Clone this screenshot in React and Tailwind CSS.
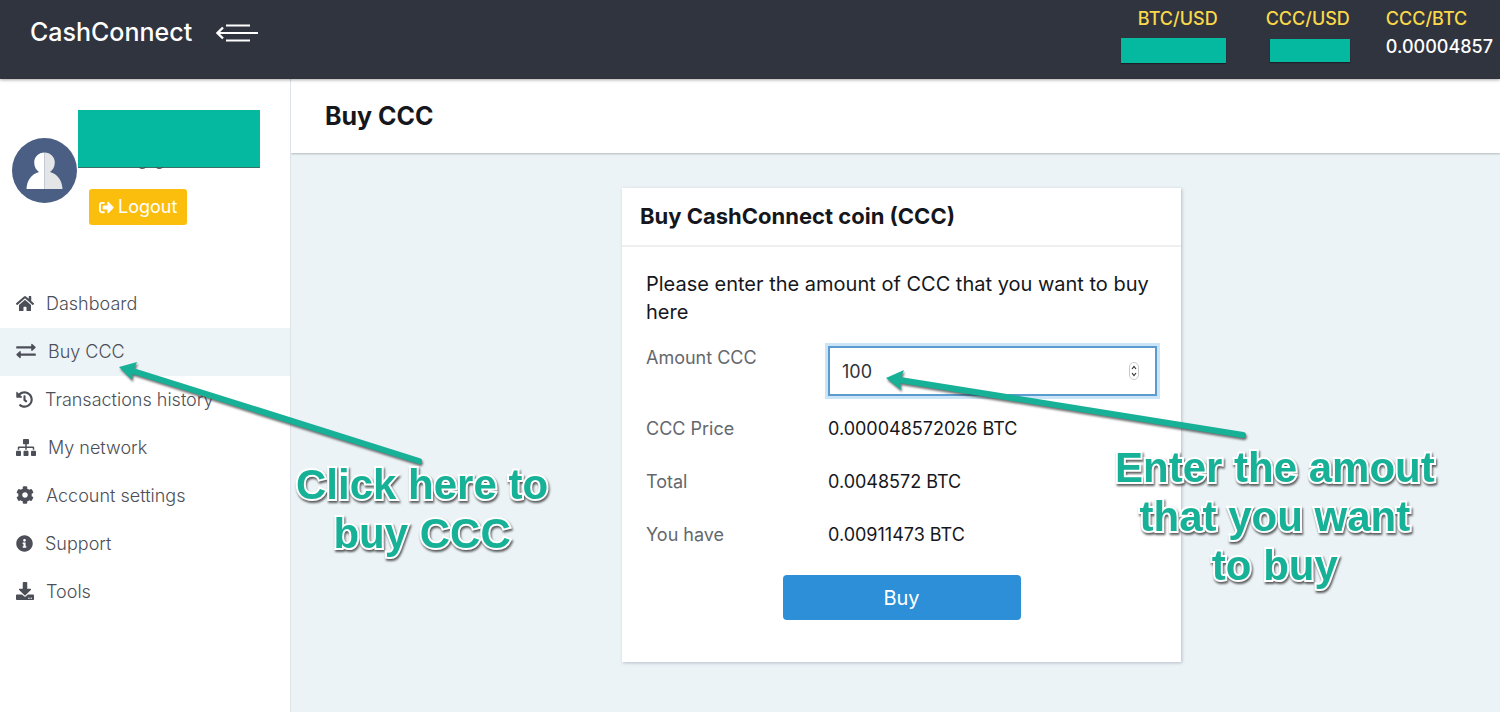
import React, { useState } from 'react';
import {
  FaHome,
  FaHistory,
  FaSitemap,
  FaCog,
  FaInfoCircle,
  FaDownload,
  FaSignOutAlt,
} from 'react-icons/fa';

// ---------------------------------------------------------------------------
// Icons
// ---------------------------------------------------------------------------

function ExchangeIcon({ className }) {
  return (
    <svg viewBox="0 0 20 16" className={className} fill="currentColor" aria-hidden="true">
      <path d="M.8 3.2h14.4V1.4c0-.6.7-.9 1.1-.5l3.1 2.9c.4.3.4.8 0 1.1l-3.1 2.9c-.4.4-1.1.1-1.1-.5V5.5H.8a.6.6 0 0 1-.6-.6V3.8c0-.3.3-.6.6-.6Z" />
      <path d="M19.2 10.4H4.8V8.7c0-.6-.7-.9-1.1-.5L.6 11.1c-.4.3-.4.8 0 1.1l3.1 2.9c.4.4 1.1.1 1.1-.5v-1.8h14.4c.3 0 .6-.3.6-.6v-1.2c0-.3-.3-.6-.6-.6Z" />
    </svg>
  );
}

function MenuArrowIcon() {
  return (
    <svg width="42" height="20" viewBox="0 0 42 20" fill="none" stroke="white" strokeWidth="2" aria-hidden="true">
      <path d="M10 2.5h24M2 10h40M10 17.5h24" />
      <path d="M7 4.5 1.5 10 7 15.5" strokeWidth="2.400" />
    </svg>
  );
}

function Avatar() {
  return (
    <svg viewBox="0 0 65 65" className="mt-7 h-[65px] w-[65px] shrink-0" role="img" aria-label="Profile">
      <circle cx="32.5" cy="32.5" r="32.5" fill="#4a5f83" />
      <path d="M32.5 14.5c-6 0-10.300 4.500-10.300 10 0 4.500 2 7.500 4.800 9.500C19.500 36 15 42 14.500 51h18Z" fill="#fff" />
      <path d="M32.500 14.500c6 0 10.300 4.500 10.300 10 0 4.500-2 7.500-4.800 9.500C45.500 36 50 42 50.500 51h-18Z" fill="#e4e5e7" />
    </svg>
  );
}

const NAV = [
  { label: 'Dashboard', icon: FaHome, size: 'h-[17px] w-[18px]' },
  { label: 'Buy CCC', icon: ExchangeIcon, size: 'h-4 w-5', active: true },
  { label: 'Transactions history', icon: FaHistory, size: 'h-[17px] w-[17px]' },
  { label: 'My network', icon: FaSitemap, size: 'h-[17px] w-5' },
  { label: 'Account settings', icon: FaCog, size: 'h-[18px] w-[18px]' },
  { label: 'Support', icon: FaInfoCircle, size: 'h-[17px] w-[17px]' },
  { label: 'Tools', icon: FaDownload, size: 'h-[18px] w-[18px]' },
];

const SUMMARY = [
  { label: 'CCC Price', value: '0.000048572026 BTC' },
  { label: 'Total', value: '0.0048572 BTC' },
  { label: 'You have', value: '0.00911473 BTC' },
];

// ---------------------------------------------------------------------------
// Tutorial annotations, laid over the page
// ---------------------------------------------------------------------------

function Callout({ className, children }) {
  return (
    <p
      className={`pointer-events-none absolute z-20 text-center font-['Liberation_Sans',sans-serif] text-[42px] leading-[49px] font-bold whitespace-pre text-[#17b198] [-webkit-text-stroke:4px_white] [paint-order:stroke] drop-shadow-[1px_2px_1px_rgba(50,50,50,0.8)] ${className}`}
    >
      {children}
    </p>
  );
}

function Arrow({ className, width, height, shaft, head }) {
  return (
    <svg
      width={width}
      height={height}
      className={`pointer-events-none absolute z-20 overflow-visible drop-shadow-[1px_2px_1px_rgba(50,50,50,0.7)] ${className}`}
      aria-hidden="true"
    >
      <path d={shaft} stroke="#17b198" strokeWidth="6" strokeLinecap="round" />
      <path d={head} fill="#17b198" />
    </svg>
  );
}

// ---------------------------------------------------------------------------
// Page sections
// ---------------------------------------------------------------------------

function Header() {
  return (
    <header className="relative z-10 flex h-[79px] items-start justify-between bg-[#30343f] pr-[7px] pl-[30px] shadow-[0_1px_3px_rgba(0,0,0,0.35)]">
      <div className="flex h-[66px] items-center gap-6">
        <span className="text-[25px] font-medium text-white">CashConnect</span>
        <button type="button" aria-label="Toggle menu">
          <MenuArrowIcon />
        </button>
      </div>
      <div className="flex pt-[5px] text-lg leading-7 font-medium text-[#f9d949]">
        <div className="flex flex-col items-end">
          <span className="pr-2">BTC/USD</span>
          <span className="mt-[5px] h-[25px] w-[105px] bg-[#05b9a0] shadow-[0_1px_1px_#1d2028]" />
        </div>
        <div className="ml-10 flex flex-col items-end">
          <span>CCC/USD</span>
          <span className="mt-[6px] h-[23px] w-20 bg-[#05b9a0] shadow-[0_1px_1px_#1d2028]" />
        </div>
        <div className="ml-9 flex flex-col">
          <span>CCC/BTC</span>
          <span className="text-white">0.00004857</span>
        </div>
      </div>
    </header>
  );
}

function Sidebar() {
  return (
    <aside className="relative w-[291px] shrink-0 border-r border-[#dde3e8] bg-white pt-[31px]">
      <div className="flex h-[170px] items-start pl-3">
        <Avatar />
        <div className="ml-px">
          <div className="relative h-[57px] w-[182px] bg-[#05b9a0] shadow-[0_1px_0_#3c6f68]">
            <svg width="30" height="4" viewBox="0 0 30 4" className="absolute top-full left-[60px]" fill="none" stroke="#45484d" aria-hidden="true">
              <path d="M1 0c1 2 5 2 7 0M18 0c1 2 5 2 7 0" />
            </svg>
          </div>
          <button
            type="button"
            className="mt-[22px] ml-[11px] flex h-9 items-center gap-1 rounded-[3px] bg-[#fcbe0c] px-2.5 text-lg text-white"
          >
            <FaSignOutAlt className="h-[15px] w-[15px]" />
            Logout
          </button>
        </div>
      </div>

      <nav>
        {NAV.map(({ label, icon: Icon, size, active }) => (
          <a
            key={label}
            href="#"
            aria-current={active ? 'page' : undefined}
            className={`flex h-12 items-center gap-3 pl-4 text-lg font-light text-[#4c4f57] ${
              active ? 'bg-[#edf4f8]' : ''
            }`}
          >
            <Icon className={`mb-0.5 ${size}`} preserveAspectRatio="none" />
            {label}
          </a>
        ))}
      </nav>

      <Arrow
        className="top-[288px] left-[119px]"
        width={304}
        height={95}
        shaft="M14 4 300 94"
        head="M0 0 18 -5 14 4 13 13Z"
      />
      <Callout className="top-[381px] left-[296px]">{'Click here to\nbuy CCC'}</Callout>
    </aside>
  );
}

function BuyCard() {
  const [amount, setAmount] = useState('100');

  return (
    <section className="relative mx-auto w-full max-w-[559px] bg-white shadow-[1px_1px_3px_rgba(80,90,110,0.35)]">
      <h2 className="border-b-2 border-[#efefef] px-[18px] py-3 text-[22px] leading-[33px] font-bold text-[#15171c]">
        Buy CashConnect coin (CCC)
      </h2>

      <form className="px-6 pt-[23px] pb-[42px]" onSubmit={(e) => e.preventDefault()}>
        <p className="text-xl leading-7 text-[#15171c]">
          Please enter the amount of CCC that you want to buy here
        </p>

        <div className="mt-5 grid grid-cols-[182px_1fr] items-start">
          <label htmlFor="amount" className="text-lg leading-6 text-[#65686d]">
            Amount CCC
          </label>
          <div className="relative">
            <input
              id="amount"
              type="number"
              value={amount}
              onChange={(e) => setAmount(e.target.value)}
              className="block h-[50px] w-full [appearance:textfield] border-2 border-[#5b9bd0] bg-white px-3 text-lg text-[#30333a] ring-3 ring-[#cbe5f8] outline-none [&::-webkit-inner-spin-button]:appearance-none"
            />
            <svg width="10" height="18" viewBox="0 0 10 18" className="absolute top-4 right-[18px]" fill="none" aria-hidden="true">
              <rect x="0.500" y="0.500" width="9" height="17" rx="4.500" fill="#fff" stroke="#c9c9c9" />
              <path d="m3 7 2-2.500L7 7M3 11l2 2.500L7 11" stroke="#333" strokeWidth="1.200" />
            </svg>
          </div>
        </div>

        <dl className="mt-[6px]">
          {SUMMARY.map((row) => (
            <div key={row.label} className="grid h-[53px] grid-cols-[182px_1fr] items-center">
              <dt className="text-lg text-[#65686d]">{row.label}</dt>
              <dd className="text-lg text-[#15171c]">{row.value}</dd>
            </div>
          ))}
        </dl>

        <button
          type="submit"
          className="mx-auto mt-3.5 block h-[45px] w-[238px] rounded bg-[#2c8fd8] text-xl text-white"
        >
          Buy
        </button>
      </form>

      <Arrow
        className="top-[190px] left-[264px]"
        width={362}
        height={60}
        shaft="M14 2 357 57"
        head="M0 0 18 -8 14 2 15 12Z"
      />
      <Callout className="top-[255px] left-[493px]">{'Enter the amout\nthat you want\nto buy'}</Callout>
    </section>
  );
}

export default function App() {
  return (
    <div className="flex min-h-screen flex-col bg-[#ecf3f7] font-['Inter',sans-serif]">
      <Header />
      <div className="flex flex-1">
        <Sidebar />
        <main className="min-w-0 flex-1">
          <div className="bg-white px-[34px] py-[18px] shadow-[0_1px_2px_rgba(0,0,0,0.25)]">
            <h1 className="text-[25px] leading-[38px] font-bold text-[#15171c]">Buy CCC</h1>
          </div>
          <div className="pt-[35px] pb-12 pl-3">
            <BuyCard />
          </div>
        </main>
      </div>
    </div>
  );
}
